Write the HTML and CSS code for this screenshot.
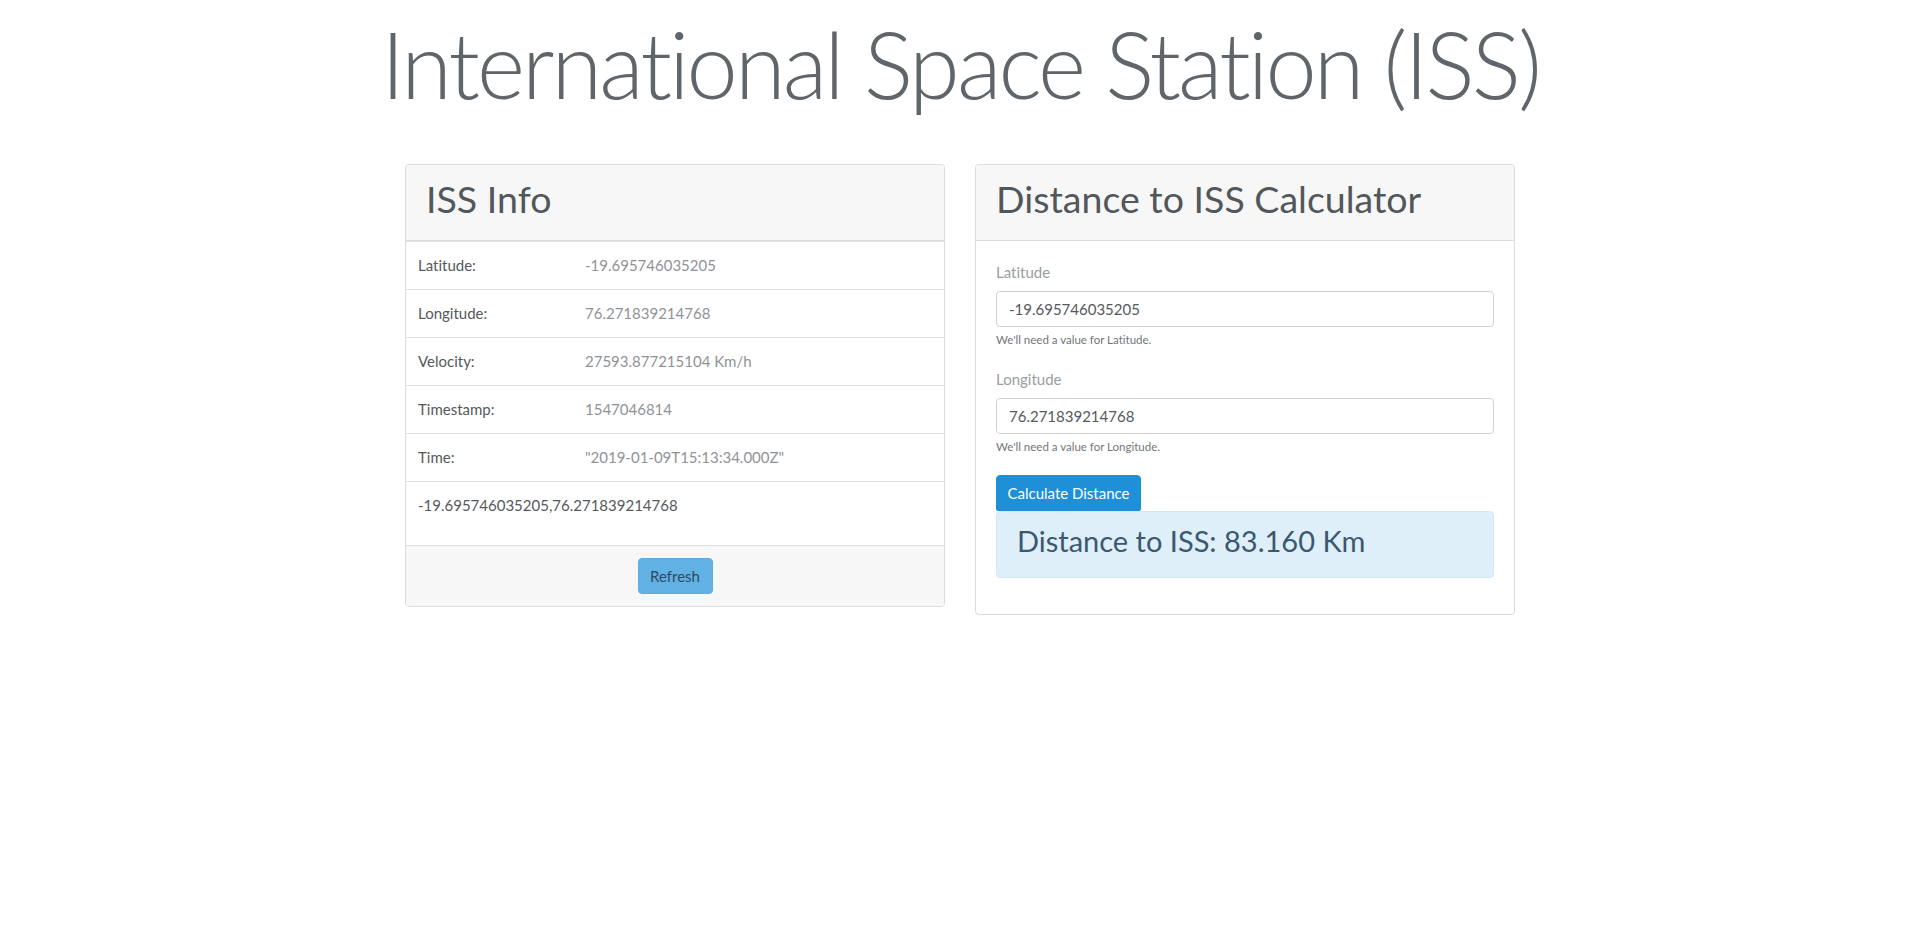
FILE: index.html
```html
<!DOCTYPE html>
<html lang="en">
<head>
<meta charset="utf-8">
<title>International Space Station (ISS)</title>
<link rel="stylesheet" href="styles.css">
</head>
<body>
<div class="container">
  <h1 class="display">International Space Station (ISS)</h1>
  <div class="row">
    <div class="card">
      <div class="card-header"><h1 class="card-title">ISS Info</h1></div>
      <ul class="list">
        <li class="list-item"><span class="label">Latitude:</span><span class="value">-19.695746035205</span></li>
        <li class="list-item"><span class="label">Longitude:</span><span class="value">76.271839214768</span></li>
        <li class="list-item"><span class="label">Velocity:</span><span class="value">27593.877215104 Km/h</span></li>
        <li class="list-item"><span class="label">Timestamp:</span><span class="value">1547046814</span></li>
        <li class="list-item"><span class="label">Time:</span><span class="value">"2019-01-09T15:13:34.000Z"</span></li>
        <li class="list-item coords"><p>-19.695746035205,76.271839214768</p></li>
      </ul>
      <div class="card-footer"><button class="btn btn-refresh" type="button">Refresh</button></div>
    </div>
    <div class="card">
      <div class="card-header"><h1 class="card-title">Distance to ISS Calculator</h1></div>
      <div class="card-body">
        <div class="form-group">
          <label class="form-label" for="lat">Latitude</label>
          <input class="form-control" id="lat" type="text" value="-19.695746035205">
          <small class="help">We'll need a value for Latitude.</small>
        </div>
        <div class="form-group form-group-last">
          <label class="form-label" for="lon">Longitude</label>
          <input class="form-control" id="lon" type="text" value="76.271839214768">
          <small class="help">We'll need a value for Longitude.</small>
        </div>
        <button class="btn btn-calc" type="button">Calculate Distance</button>
        <div class="alert"><h3 class="alert-title">Distance to ISS: 83.160 Km</h3></div>
      </div>
    </div>
  </div>
</div>
</body>
</html>
```
FILE: styles.css
```css
* { box-sizing: border-box; }
html, body { margin: 0; padding: 0; background: #fff; }
body {
  font-family: "Lato", "Open Sans", sans-serif;
  font-size: 15px;
  line-height: 1.5;
  color: #55595c;
  font-variant-ligatures: none;
}
.container {
  width: 1140px;
  margin: 0 auto;
  padding: 0 15px;
}
.display {
  margin: 0 -60px;
  padding-top: 9px;
  height: 164px;
  font-size: 92px;
  font-weight: 300;
  letter-spacing: -2.9px;
  line-height: 1.2;
  text-align: center;
  white-space: nowrap;
  color: #5f6569;
}
.row {
  display: flex;
  gap: 30px;
  align-items: flex-start;
}
.card {
  flex: 1 1 0;
  border: 1px solid #dcdcdc;
  border-radius: 4px;
  background: #fff;
  overflow: hidden;
}
.card-header {
  background: #f7f7f7;
  padding: 10px 20px 17px;
  border-bottom: 1px solid #dcdcdc;
}
.card-title {
  margin: 0;
  font-size: 37.5px;
  font-weight: 400;
  line-height: 48px;
  color: #52575b;
}
.list {
  list-style: none;
  margin: 0;
  padding: 0;
  border-top: 1px solid #e2e4e6;
}
.list-item {
  display: grid;
  grid-template-columns: 167px 1fr;
  padding: 12px 12px;
  line-height: 23px;
  border-bottom: 1px solid #e2e4e6;
}
.list-item .label { color: #55595c; }
.list-item .value { color: #8f9396; }
.list-item.coords { display: block; border-bottom: 0; }
.coords p { margin: 0 0 16px; color: #55595c; }
.card-footer {
  background: #f7f7f7;
  padding: 12px 20px;
  border-top: 1px solid #dcdcdc;
  text-align: center;
}
.btn {
  font-family: inherit;
  font-size: 15px;
  line-height: 22px;
  height: 36px;
  border: 1px solid transparent;
  border-radius: 4px;
  cursor: pointer;
}
.btn-refresh {
  background: #62b1e5;
  border-color: #5eade2;
  color: #2c4a63;
  padding: 6px 0;
  width: 75px;
}
.btn-calc {
  display: block;
  background: #1e90d7;
  border-color: #1e90d7;
  color: #fff;
  width: 145px;
  padding: 6px 0;
  border-radius: 4px 4px 2px 2px;
}
.card-body { padding: 20px; }
.form-group { margin-bottom: 19px; }
.form-group-last { margin-bottom: 19px; }
.form-label {
  display: block;
  color: #9a9d9f;
  line-height: 22px;
  margin-bottom: 8px;
}
.form-control {
  display: block;
  width: 100%;
  height: 36px;
  padding: 6px 12px;
  font-family: inherit;
  font-size: 15px;
  color: #55595c;
  border: 1px solid #cfd1d3;
  border-radius: 4px;
  background: #fff;
}
.help {
  display: block;
  margin-top: 4px;
  font-size: 11.5px;
  line-height: 18px;
  color: #727679;
}
.alert {
  background: #dfeffa;
  border: 1px solid #d3e8f6;
  border-radius: 4px;
  padding: 12px 20px;
  margin-bottom: 16px;
  color: #3a5870;
}
.alert-title {
  margin: 0 0 6px;
  font-size: 29px;
  font-weight: 400;
  line-height: 1.2;
}
```
